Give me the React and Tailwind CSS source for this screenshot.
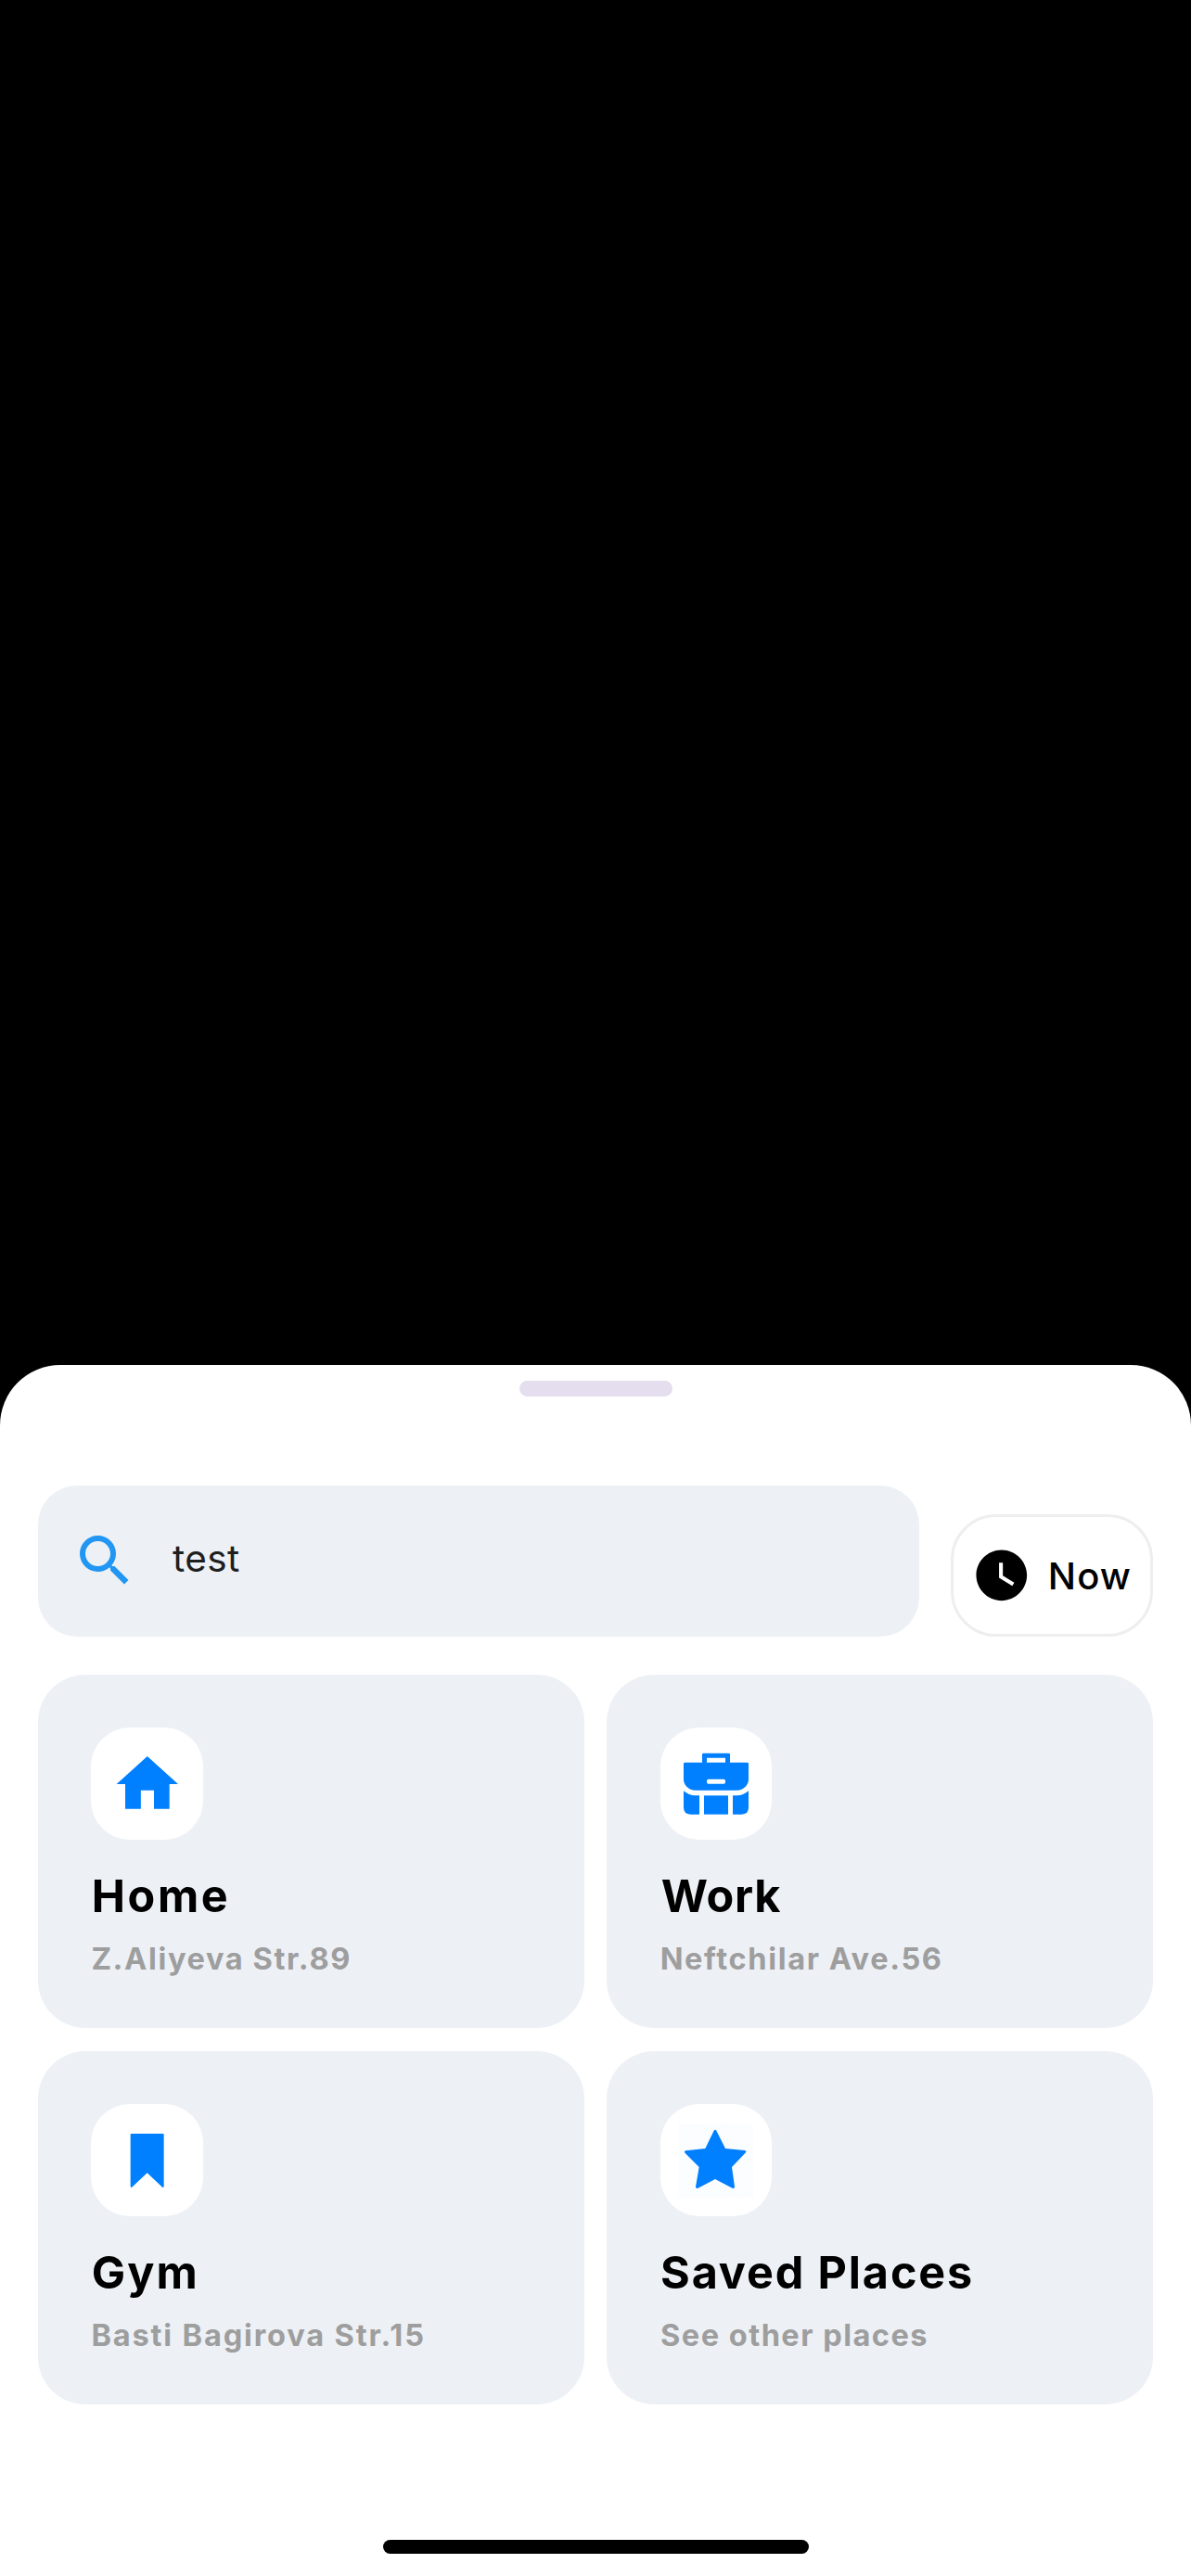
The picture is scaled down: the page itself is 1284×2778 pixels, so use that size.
function SearchIcon() {
  return (
    <svg viewBox="0 0 24 24" className="size-[72px] shrink-0 fill-[#2196f3]">
      <path d="M15.5 14h-.79l-.28-.27A6.471 6.471 0 0 0 16 9.5 6.5 6.5 0 1 0 9.5 16c1.61 0 3.09-.59 4.23-1.57l.27.28v.79l5 4.99L20.49 19l-4.99-5zm-6 0C7.01 14 5 11.99 5 9.5S7.01 5 9.5 5 14 7.01 14 9.5 11.99 14 9.5 14z" />
    </svg>
  );
}

function ClockIcon() {
  return (
    <svg viewBox="0 0 24 24" className="size-[65.6px] shrink-0 fill-black">
      <path d="M12 2C6.5 2 2 6.5 2 12s4.5 10 10 10 10-4.5 10-10S17.5 2 12 2zm4.2 14.2L11 13V7h1.5v5.2l4.5 2.7-.8 1.3z" />
    </svg>
  );
}

function HomeIcon() {
  return (
    <svg viewBox="0 0 24 24" className="size-20 fill-[#007fff]">
      <path d="M9.85 20v-6h4.25v6h5v-8h2.8L11.95 3 2 12h2.8v8z" />
    </svg>
  );
}

function BriefcaseIcon() {
  return (
    <svg viewBox="0 0 240 240" className="size-20 fill-[#007fff]">
      <path
        fillRule="evenodd"
        d="M75 50V24Q75 20 79 20H161Q165 20 165 24V50H221Q225 50 225 54V105Q225 118 215 128Q203 140 187 140H53Q37 140 25 128Q15 118 15 105V54Q15 50 19 50ZM90 35V50H150V35ZM95 104Q90 104 90 109V114Q90 119 95 119H145Q150 119 150 114V109Q150 104 145 104Z"
      />
      <path d="M15 142Q32 157 53 157H66V218H37Q15 218 15 196Z" />
      <path d="M81 157H159V218H81Z" />
      <path d="M174 157H187Q208 157 225 142V196Q225 218 203 218H174Z" />
    </svg>
  );
}

function BookmarkIcon() {
  return (
    <svg viewBox="0 0 240 240" className="size-20 fill-[#007fff]">
      <path d="M68 33H170Q173 33 173 36V203Q173 207 169 207L119 160L69 207Q65 207 65 203V36Q65 33 68 33Z" />
    </svg>
  );
}

function StarIcon() {
  return (
    <svg viewBox="0 0 240 240" className="size-20 fill-[#007fff]">
      <defs>
        <pattern id="star-hatch" width="8.5" height="8.5" patternUnits="userSpaceOnUse" patternTransform="rotate(45)">
          <rect width="3" height="8.5" fill="#f2f9ff" />
        </pattern>
      </defs>
      <rect width="240" height="240" fill="url(#star-hatch)" />
      <path d="M113 23Q117 18 121 23L150 81L213 87Q219 89 216 94L171 141L180 205Q180 211 174 210L117 180L60 210Q54 211 54 205L65 141L20 96Q15 90 22 88L85 81Z" />
    </svg>
  );
}

const places = [
  { title: "Home", subtitle: "Z.Aliyeva Str.89", Icon: HomeIcon, titleClass: "tracking-[2.6px] pl-[0.4px]", subtitleClass: "tracking-[1.6px]" },
  { title: "Work", subtitle: "Neftchilar Ave.56", Icon: BriefcaseIcon, titleClass: "tracking-[0.85px] pl-px", subtitleClass: "tracking-[1.61px]" },
  { title: "Gym", subtitle: "Basti Bagirova Str.15", Icon: BookmarkIcon, titleClass: "tracking-[2.1px] pl-[0.4px]", subtitleClass: "tracking-[1.83px]" },
  { title: "Saved Places", subtitle: "See other places", Icon: StarIcon, titleClass: "tracking-[1.88px] pl-[0.4px]", subtitleClass: "tracking-[1.46px] pl-[0.4px]" },
];

function PlaceCard({ title, subtitle, Icon, titleClass, subtitleClass }) {
  return (
    <div className="h-[381.3px] rounded-[51px] bg-[#edf1f6] pt-[57.5px] pl-[57.3px]">
      <div className="flex size-[120.8px] items-center justify-center rounded-[42px] bg-white">
        <Icon />
      </div>
      <div className={`mt-[30.7px] text-[48.5px] leading-[60px] font-bold whitespace-nowrap text-black ${titleClass}`}>{title}</div>
      <div className={`mt-[17.5px] text-[32.6px] leading-[40px] font-bold whitespace-nowrap text-[#9e9e9e] ${subtitleClass}`}>{subtitle}</div>
    </div>
  );
}

export default function App() {
  return (
    <div className="flex h-[2778px] w-[1284px] flex-col bg-black font-['Inter',sans-serif]">
      <div className="mt-[1472.4px] flex flex-1 flex-col items-center rounded-t-[65px] bg-white pt-[16.4px]">
        <div className="h-[16.8px] w-[165px] rounded-[8.4px] bg-[#e5deee]" />

        <div className="mt-[96.2px] flex w-[1201.8px] items-end justify-between">
          <div className="flex h-[162.8px] w-[950.2px] items-center rounded-[42px] bg-[#edf1f6] pl-[35.7px]">
            <SearchIcon />
            <span className="-mt-[5px] ml-[37.2px] text-[40.5px] leading-[48px] tracking-[0.4px] text-[#1f1f1f]">test</span>
          </div>
          <div className="flex h-[131.6px] w-[218.4px] items-center rounded-[49px] border-[3px] border-[#eeeeee] pl-[19.3px]">
            <ClockIcon />
            <span className="mt-[2.4px] ml-[17.4px] text-[40px] leading-[48px] font-[450] tracking-[1.1px] text-black">Now</span>
          </div>
        </div>

        <div className="mt-[41.4px] grid w-[1201.8px] grid-cols-2 gap-[24.7px]">
          {places.map((place) => (
            <PlaceCard key={place.title} {...place} />
          ))}
        </div>

        <div className="mt-auto mb-[24px] ml-[1px] h-[15px] w-[459px] rounded-full bg-black" />
      </div>
    </div>
  );
}
